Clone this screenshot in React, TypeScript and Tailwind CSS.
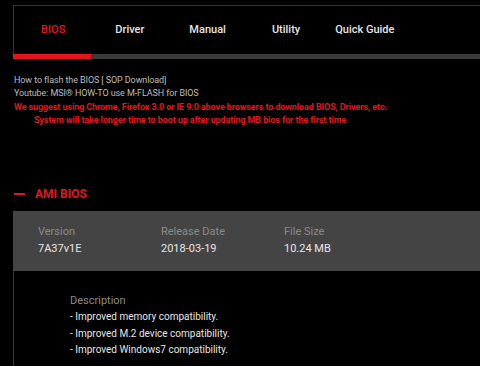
import React from 'react';

const tabs = ['BIOS', 'Driver', 'Manual', 'Utility', 'Quick Guide'];

export default function App() {
  return (
    <div className="w-[480px] h-[366px] overflow-hidden bg-black text-white font-['Roboto',sans-serif]">
      <div className="pt-[5px]">
        <div className="h-px bg-[#333] ml-[13px]" />
        {/* tabs */}
        <div className="ml-[13px] border-l border-[#333] h-[48px] flex items-center text-[11px] font-medium text-[#e6e6e6]">
          <span className="ml-[27px] text-[#e3161b]">{tabs[0]}</span>
          <span className="ml-[50px]">{tabs[1]}</span>
          <span className="ml-[45px]">{tabs[2]}</span>
          <span className="ml-[46px]">{tabs[3]}</span>
          <span className="ml-[35px]">{tabs[4]}</span>
        </div>
        <div className="ml-[13px] h-[5px] flex">
          <div className="w-[78px] bg-[#e3161b]" />
          <div className="flex-1 bg-[#3a3a3a]" />
        </div>
      </div>

      <div className="mt-[15px] pl-[14px] text-[9px] leading-[13.4px] tracking-[-0.1px]">
        <p className="text-[#bdbdbd]">How to flash the BIOS [ SOP Download]</p>
        <p className="text-[#bdbdbd]">Youtube: MSI® HOW-TO use M-FLASH for BIOS</p>
        <p className="text-[#e3161b] font-bold">We suggest using Chrome, Firefox 3.0 or IE 9.0 above browsers to download BIOS, Drivers, etc.</p>
        <p className="text-[#e3161b] font-bold pl-[20px]">System will take longer time to boot up after updating MB bios for the first time</p>
      </div>

      <div className="mt-[57px] pl-[14px] flex items-center gap-[10px]">
        <div className="w-[11px] h-[2px] bg-[#e3161b]" />
        <span className="text-[12px] font-bold text-[#e3161b]">AMI BIOS</span>
      </div>

      <div className="mt-[8px] ml-[13px] h-[60px] bg-[#444] flex pl-[25px] pt-[13px] text-[11px]">
        <div className="w-[123px]">
          <p className="text-[#8a8a8a]">Version</p>
          <p className="text-[#e6e6e6] mt-[1px]">7A37v1E</p>
        </div>
        <div className="w-[123px]">
          <p className="text-[#8a8a8a]">Release Date</p>
          <p className="text-[#e6e6e6] mt-[1px]">2018-03-19</p>
        </div>
        <div>
          <p className="text-[#8a8a8a]">File Size</p>
          <p className="text-[#e6e6e6] mt-[1px]">10.24 MB</p>
        </div>
      </div>

      <div className="ml-[13px] border-l border-[#333] h-[96px] pl-[56px] pt-[22px] text-[10px]">
        <p className="text-[#8a8a8a] text-[11px]">Description</p>
        <p className="text-[#e6e6e6] leading-[16.5px]">- Improved memory compatibility.</p>
        <p className="text-[#e6e6e6] leading-[16.5px]">- Improved M.2 device compatibility.</p>
        <p className="text-[#e6e6e6] leading-[16.5px]">- Improved Windows7 compatibility.</p>
      </div>
    </div>
  );
}
